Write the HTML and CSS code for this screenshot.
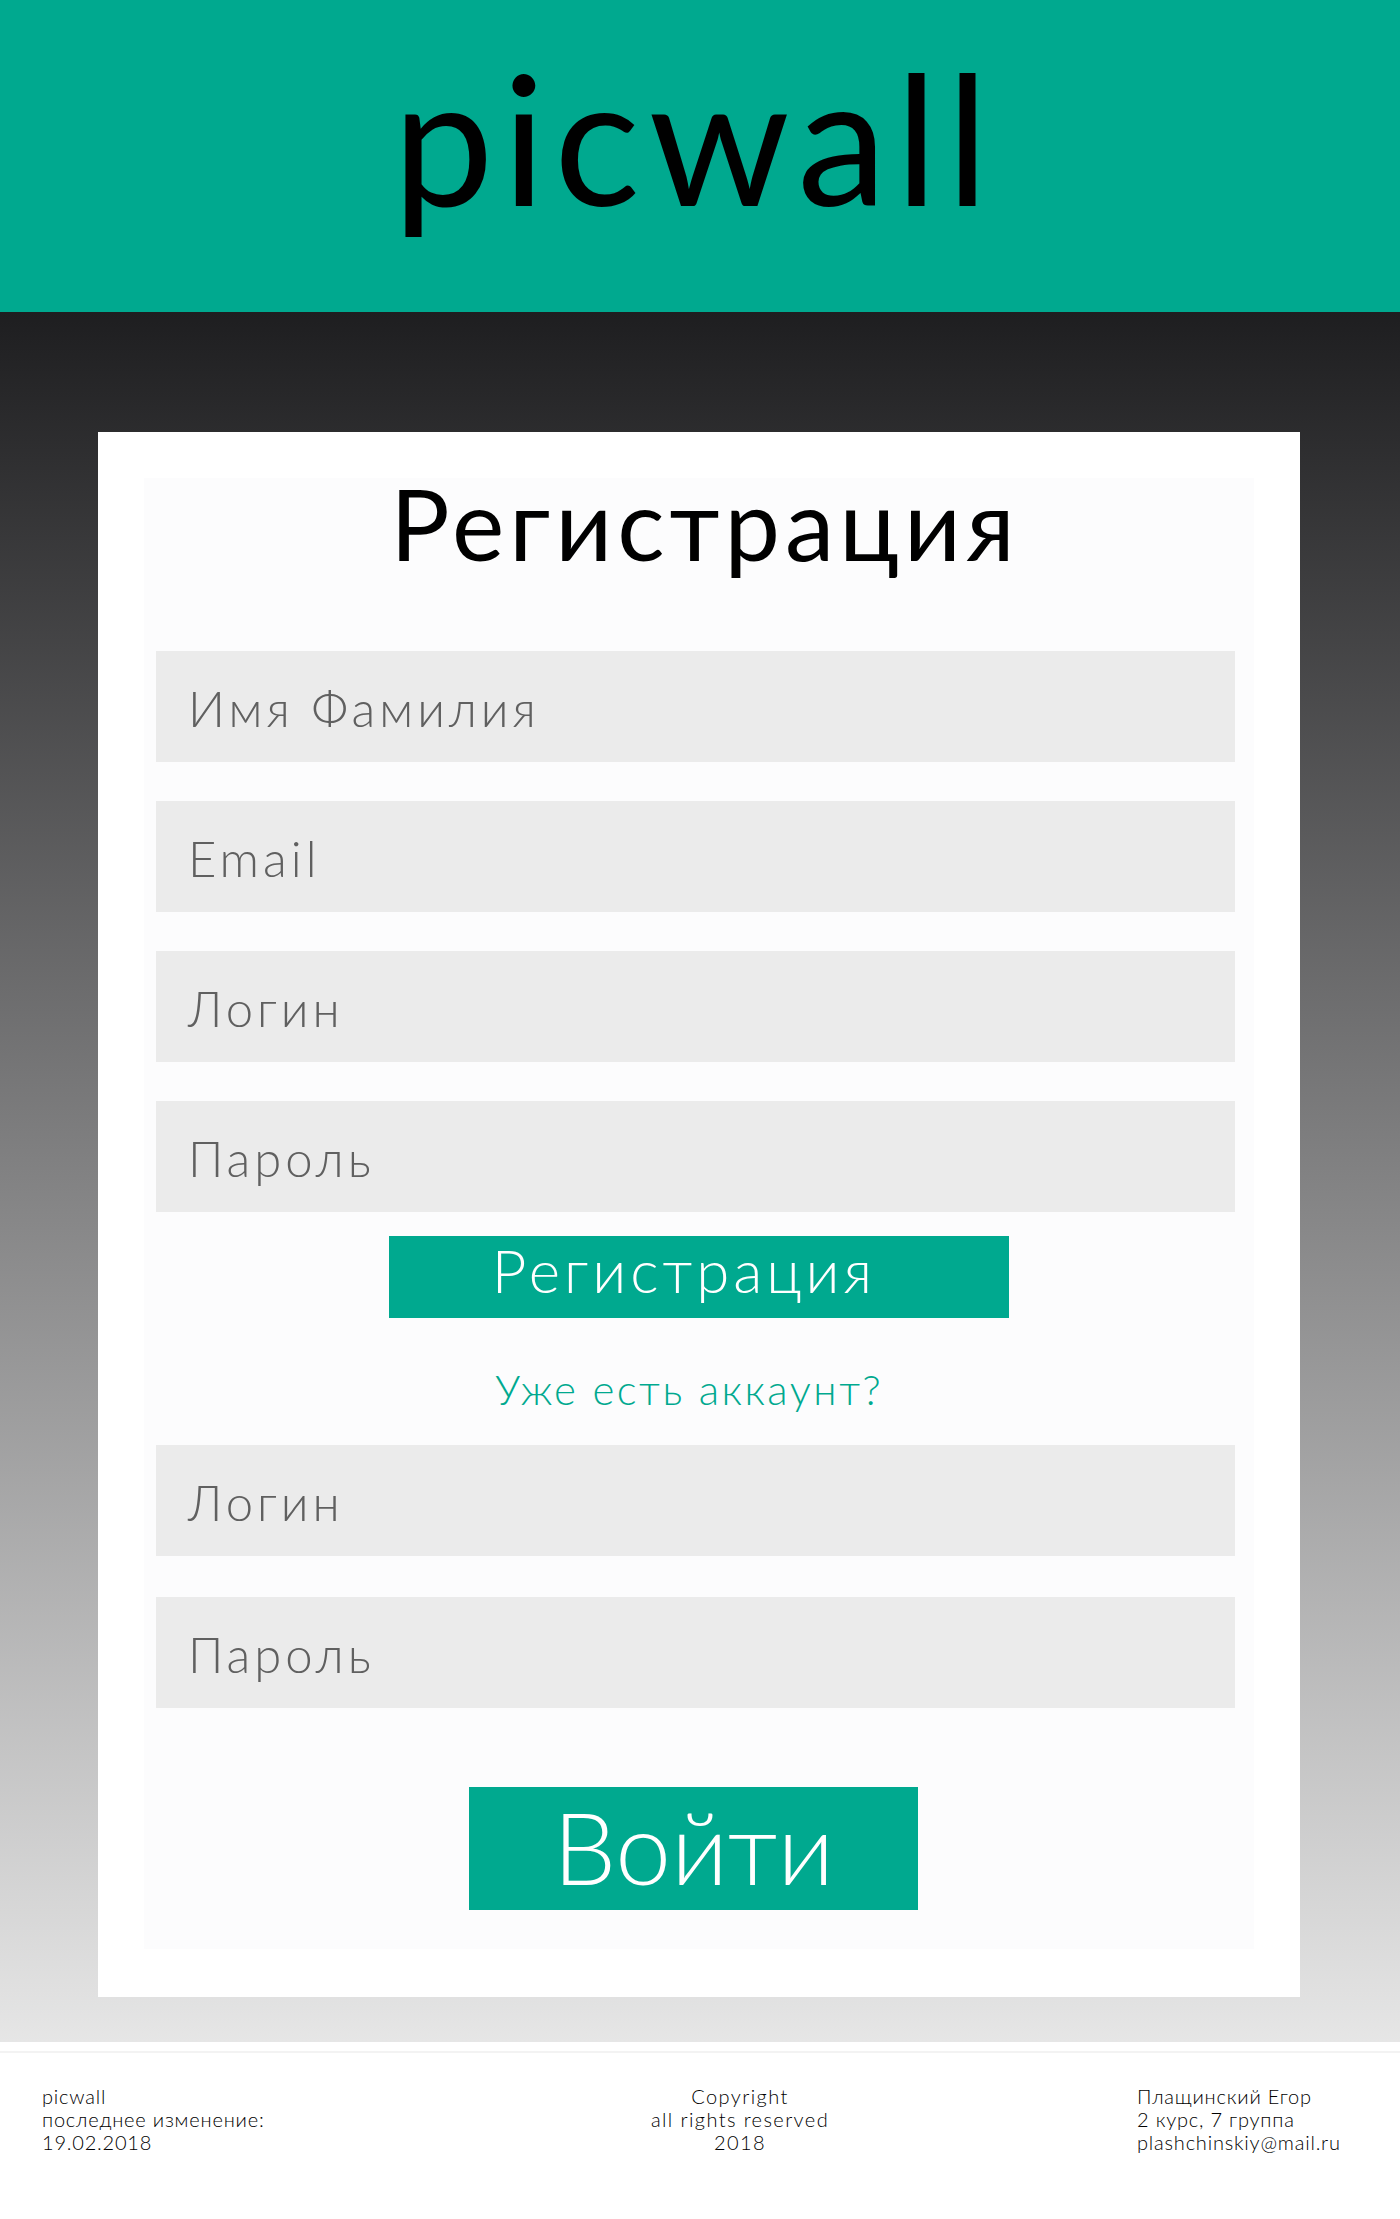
FILE: index.html
```html
<!DOCTYPE html>
<html lang="ru">
<head>
<meta charset="utf-8">
<title>picwall</title>
<link rel="stylesheet" href="styles.css">
</head>
<body>
<header class="header">
  <h1 class="logo">picwall</h1>
</header>
<main class="main">
  <section class="card">
    <div class="panel">
      <h2 class="title">Регистрация</h2>
      <div class="field field-first">Имя Фамилия</div>
      <div class="field">Email</div>
      <div class="field">Логин</div>
      <div class="field">Пароль</div>
      <div class="btn-reg">Регистрация</div>
      <div class="have-account">Уже есть аккаунт?</div>
      <div class="field field-login">Логин</div>
      <div class="field field-pass">Пароль</div>
      <div class="btn-login">Войти</div>
    </div>
  </section>
</main>
<footer class="footer">
  <div class="footer-rule"></div>
  <div class="footer-cols">
    <div class="footer-left">picwall<br>последнее изменение:<br>19.02.2018</div>
    <div class="footer-mid">Copyright<br>all rights reserved<br>2018</div>
    <div class="footer-right">Плащинский Егор<br>2 курс, 7 группа<br>plashchinskiy@mail.ru</div>
  </div>
</footer>
</body>
</html>
```

FILE: styles.css
```css
* { box-sizing: border-box; }
html, body { margin: 0; padding: 0; }
body {
  font-family: Lato, "Noto Sans", "DejaVu Sans", sans-serif;
  background: #ffffff;
  width: 1400px;
}
.header {
  height: 312px;
  background: #00a98f;
  padding: 46px 10px 0 0;
}
.logo {
  margin: 0;
  font-size: 180px;
  line-height: 180px;
  font-weight: 400;
  letter-spacing: 8.5px;
  color: #000;
  text-align: center;
}
.main {
  background: linear-gradient(to bottom, #1e1e20 0%, #e6e6e6 100%);
  padding: 120px 100px 45px 98px;
}
.card {
  background: #ffffff;
  padding: 46px 46px 48px 46px;
}
.panel {
  background: #fcfcfd;
  padding: 0 0 39px 0;
}
.title {
  margin: 0;
  padding-left: 12px;
  font-size: 99px;
  line-height: 90px;
  font-weight: 400;
  letter-spacing: 5px;
  color: #000;
  text-align: center;
}
.field {
  margin: 39px 0 0 12px;
  width: 1079px;
  height: 111px;
  padding: 3px 0 0 32px;
  line-height: 108px;
  background: #ebebeb;
  color: #606060;
  font-size: 49px;
  font-weight: 300;
  letter-spacing: 4px;
}
.field-first { margin-top: 83px; }
.field-login { margin-top: 31px; }
.field-pass { margin-top: 41px; }
.btn-reg {
  margin: 24px auto 0 auto;
  width: 620px;
  height: 82px;
  padding: 0 30px 14px 0;
  line-height: 68px;
  background: #00a98f;
  color: #ffffff;
  font-size: 60px;
  font-weight: 300;
  letter-spacing: 4px;
  text-align: center;
}
.have-account {
  margin-top: 46px;
  padding-right: 20px;
  line-height: 50px;
  font-size: 42px;
  font-weight: 300;
  letter-spacing: 2.5px;
  color: #00a98f;
  text-align: center;
}
.btn-login {
  margin: 79px 0 0 325px;
  width: 449px;
  height: 123px;
  padding-bottom: 4px;
  line-height: 119px;
  background: #00a98f;
  color: #ffffff;
  font-size: 100px;
  font-weight: 300;
  text-align: center;
}
.footer {
  height: 177px;
  padding-top: 9px;
  background: #ffffff;
}
.footer-rule {
  height: 2px;
  background: #f3f3f3;
}
.footer-cols {
  display: flex;
  padding: 32px 0 0 42px;
  font-size: 20px;
  font-weight: 300;
  line-height: 23px;
  letter-spacing: 0.8px;
  color: #000;
}
.footer-left { flex: 0 0 558px; }
.footer-mid { flex: 0 0 280px; text-align: center; letter-spacing: 1.4px; }
.footer-right { margin-left: 257px; }
```
